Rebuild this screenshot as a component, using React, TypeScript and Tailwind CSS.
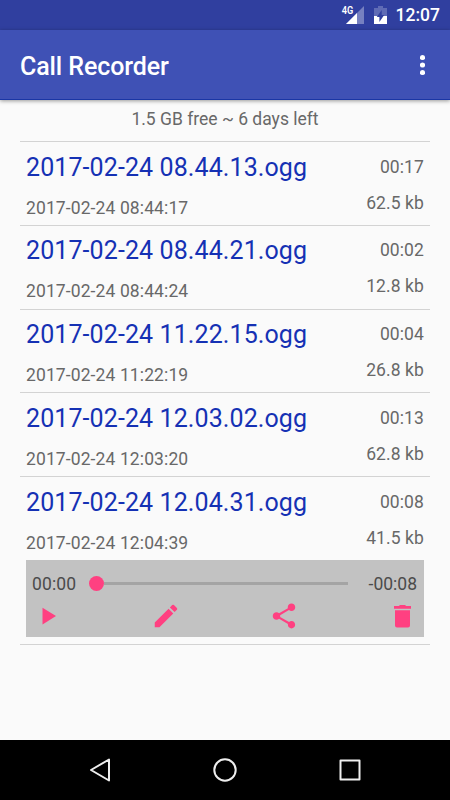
import React from "react";

const recordings = [
  { name: "2017-02-24 08.44.13.ogg", date: "2017-02-24 08:44:17", length: "00:17", size: "62.5 kb" },
  { name: "2017-02-24 08.44.21.ogg", date: "2017-02-24 08:44:24", length: "00:02", size: "12.8 kb" },
  { name: "2017-02-24 11.22.15.ogg", date: "2017-02-24 11:22:19", length: "00:04", size: "26.8 kb" },
  { name: "2017-02-24 12.03.02.ogg", date: "2017-02-24 12:03:20", length: "00:13", size: "62.8 kb" },
  { name: "2017-02-24 12.04.31.ogg", date: "2017-02-24 12:04:39", length: "00:08", size: "41.5 kb" },
];

function StatusBar() {
  return (
    <div className="flex h-[30px] shrink-0 items-center justify-end bg-[#303f9f] pr-[10px] text-white">
      <svg className="h-[30px] w-[24px]" viewBox="0 0 24 30" aria-hidden="true">
        <path d="M24 6v18H6z" fill="#7680c0" />
        <path d="M0 4h13v10.500H0z" fill="#303f9f" />
        <path d="M17 13v11H6z" fill="#fff" />
        <text x="1.700" y="14" fontSize="10" fontWeight="600" fill="#fff" fontFamily="Roboto" textLength="11.500" lengthAdjust="spacingAndGlyphs">
          4G
        </text>
      </svg>
      <svg className="ml-[10px] h-[30px] w-[13px]" viewBox="0 0 13 30" aria-hidden="true">
        <path d="M4 6h5v2h4v8H0V8h4z" fill="#5f6bb5" />
        <path d="M0 16h13v8H0z" fill="#fff" />
        <path d="M7.700 10v5h2.500l-4.800 7v-5H2.800z" fill="#303f9f" />
      </svg>
      <span className="ml-[9px] pt-[1px] text-[17.5px] leading-[21px] font-medium">12:07</span>
    </div>
  );
}

function AppBar() {
  return (
    <header className="relative z-10 flex h-[70px] shrink-0 items-center justify-between border-b border-[#1a36a5] bg-[#3f51b5] pr-[25px] pl-[20px] shadow-[0_1px_4px_rgba(0,0,0,0.4)]">
      <h1 className="mt-[5px] text-[25px] leading-[30px] font-medium tracking-[-0.1px] text-white">Call Recorder</h1>
      <svg className="h-[22px] w-[5px]" viewBox="0 0 5 22" fill="#fff" aria-label="More options">
        <circle cx="2.5" cy="3.5" r="2.6" />
        <circle cx="2.5" cy="11" r="2.6" />
        <circle cx="2.5" cy="18.5" r="2.6" />
      </svg>
    </header>
  );
}

function Player() {
  return (
    <div className="mx-[6px] h-[77px] bg-[#c2c2c2] text-[#4b4b4b]">
      <div className="flex h-[43px] items-center pt-[5px] pr-[7px] pl-[6px] text-[17.5px] leading-[21px]">
        <span className="w-[57px] pt-[2px] tracking-[0.15px]">00:00</span>
        <div className="flex flex-1 items-center">
          <div className="size-[15px] rounded-full bg-[#ff4081]" />
          <div className="h-[3px] w-[244px] bg-[#a4a4a4]" />
        </div>
        <span className="pt-[2px]">-00:08</span>
      </div>
      <div className="flex h-[26px] items-center justify-between pr-[7px] pl-[7px] text-[#ff4081]">
        <svg className="size-[30px]" viewBox="0 0 30 30" fill="currentColor" aria-label="Play">
          <path d="M9.500 6.700v16.800L23 15z" />
        </svg>
        <svg className="size-[30px]" viewBox="0 0 24 24" fill="currentColor" aria-label="Rename">
          <path d="M3 17.25V21h3.75L17.81 9.94l-3.75-3.75L3 17.25zM20.71 7.04a1 1 0 0 0 0-1.41l-2.34-2.34a1 1 0 0 0-1.41 0l-1.83 1.83 3.75 3.75 1.83-1.83z" />
        </svg>
        <svg className="size-[30px]" viewBox="0 0 24 24" fill="currentColor" aria-label="Share">
          <path d="M18 16.08c-.76 0-1.44.3-1.96.77L8.91 12.7c.05-.23.09-.46.09-.7s-.04-.47-.09-.7l7.05-4.11c.54.5 1.25.81 2.04.81 1.66 0 3-1.34 3-3s-1.34-3-3-3-3 1.34-3 3c0 .24.04.47.09.7L8.04 9.81C7.5 9.31 6.79 9 6 9c-1.66 0-3 1.34-3 3s1.34 3 3 3c.79 0 1.5-.31 2.04-.81l7.12 4.16c-.05.21-.08.43-.08.65 0 1.61 1.31 2.92 2.92 2.92s2.92-1.31 2.92-2.92-1.31-2.92-2.92-2.92z" />
        </svg>
        <svg className="size-[30px]" viewBox="0 0 30 30" fill="currentColor" aria-label="Delete">
          <path d="M8 9.200h15v15.300a2 2 0 0 1-2 2H10a2 2 0 0 1-2-2zM7 5h4.800L13 4h5l1.200 1H24v2.700H7z" />
        </svg>
      </div>
    </div>
  );
}

function Recording({ item, open }: { item: (typeof recordings)[number]; open: boolean }) {
  return (
    <li className="border-b border-[#d3d3d3]">
      <div className="flex h-[82.8px] justify-between px-[6px] text-[17.5px] leading-[21px] text-[#686868]">
        <div className="pt-[10.7px]">
          <div className="text-[25px] leading-[29px] tracking-[0.1px] text-[#1531b4]">{item.name}</div>
          <div className="mt-[16px] tracking-[0.11px]">{item.date}</div>
        </div>
        <div className="pt-[14.7px] text-right tracking-[0.1px]">
          <div>{item.length}</div>
          <div className="mt-[15px]">{item.size}</div>
        </div>
      </div>
      {open && <div className="pb-[7px]"><Player /></div>}
    </li>
  );
}

export default function App() {
  return (
    <div className="flex h-[800px] w-[450px] flex-col overflow-hidden bg-[#fafafa] font-['Roboto',sans-serif]">
      <StatusBar />
      <AppBar />
      <main className="flex-1 px-[20px]">
        <div className="h-[42px] border-b border-[#d3d3d3] pt-[9px] text-center text-[17.5px] leading-[21px] text-[#686868]">
          1.5 GB free ~ 6 days left
        </div>
        <ul>
          {recordings.map((item, i) => (
            <Recording key={item.name} item={item} open={i === recordings.length - 1} />
          ))}
        </ul>
      </main>
      <nav className="flex h-[60px] shrink-0 items-center justify-between bg-black px-[85px]">
        <svg className="size-[30px]" viewBox="0 0 30 30" fill="none" stroke="#eee" strokeWidth="2" strokeLinejoin="round" aria-label="Back">
          <path d="M24 4.500v21L6 15z" />
        </svg>
        <svg className="size-[30px]" viewBox="0 0 30 30" fill="none" stroke="#eee" strokeWidth="2" aria-label="Home">
          <circle cx="15" cy="15" r="10.700" />
        </svg>
        <svg className="size-[30px]" viewBox="0 0 30 30" fill="none" stroke="#eee" strokeWidth="2" strokeLinejoin="round" aria-label="Recents">
          <path d="M5.500 5.500h19v19h-19z" />
        </svg>
      </nav>
    </div>
  );
}
